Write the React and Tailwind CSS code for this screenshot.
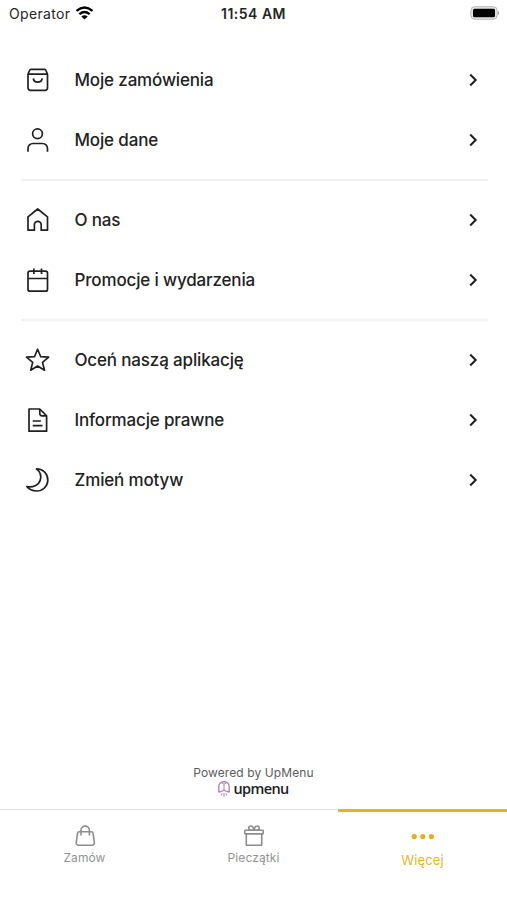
const icons = {
  orders: (
    <>
      <path d="M7 2.300h13.500a1.500 1.500 0 0 1 1.400 1l1.600 4v13.700a2.300 2.300 0 0 1-2.300 2.300H6.300a2.300 2.300 0 0 1-2.300-2.300V7.300l1.600-4a1.500 1.500 0 0 1 1.400-1z" strokeLinejoin="round" />
      <path d="M4 7.200h19.500M9.300 11.300c.6 5 8.300 5 8.900 0" />
    </>
  ),
  user: (
    <>
      <circle cx="13.5" cy="6.7" r="4.9" />
      <path d="M4 24.7v-3.2a5 5 0 0 1 5-5h9.5a5 5 0 0 1 5 5v3.2" />
    </>
  ),
  home: <path d="M4 23.2V9.8l9.7-7.8 9.8 7.8v13.4h-6.3v-5.4a3.4 3.4 0 0 0-6.8 0v5.4z" strokeLinejoin="round" />,
  calendar: (
    <>
      <rect x="4" y="4.2" width="19.5" height="20" rx="2" />
      <path d="M4 11.500h19.500M9.900 1.500v5.400M17.500 1.500v5.400" />
    </>
  ),
  star: <path d="M13.6 2.2l3.1 7.5 8 .5-6.2 5.2 2 7.8-6.9-4.2-6.9 4.2 2-7.8-6.2-5.2 8-.5z" strokeLinejoin="round" />,
  doc: (
    <>
      <path d="M15.8 2H5v22.2h17.6V8.8z" strokeLinejoin="round" />
      <path d="M15.800 2v4.800a2 2 0 0 0 2 2h4.800M8.700 14h8.200M8.700 18.700h9.800" strokeLinejoin="round" />
    </>
  ),
  moon: <path d="M12.400 1.900C20 2 24 7.500 23.800 13.500C23.600 19.500 18.600 24 12.800 24C8.500 24 4.700 22.200 2.800 19.600C9 20.600 14.700 18.400 16.300 13C17.500 8.800 15.800 4.500 12.400 1.900z" strokeLinejoin="round" />,
};

const groups = [
  [
    ["orders", "Moje zamówienia"],
    ["user", "Moje dane"],
  ],
  [
    ["home", "O nas"],
    ["calendar", "Promocje i wydarzenia"],
  ],
  [
    ["star", "Oceń naszą aplikację"],
    ["doc", "Informacje prawne"],
    ["moon", "Zmień motyw"],
  ],
];

function Row({ icon, label }) {
  return (
    <div className="flex h-[60px] items-center pl-6 pr-[26px]">
      <svg className="h-[26px] w-[26px] shrink-0 overflow-visible" viewBox="0 0 26 26" fill="none" stroke="#202020" strokeWidth="1.7">
        {icons[icon]}
      </svg>
      <span className="ml-[24.5px] flex-1 whitespace-nowrap text-[17px] font-medium leading-6 tracking-[-0.16px] text-[#222222]">{label}</span>
      <svg className="h-4 w-4" viewBox="0 0 16 16" fill="none" stroke="#202020" strokeWidth="2">
        <path d="M5.200 2.500l5.500 5.500-5.500 5.500" />
      </svg>
    </div>
  );
}

export default function App() {
  return (
    <div className="flex h-[900px] w-[507px] flex-col overflow-hidden bg-white font-['Inter','Liberation_Sans',sans-serif]">
      <header className="grid h-[27px] grid-cols-3 items-center px-[9px] text-[#252525]">
        <div className="flex items-center gap-[5px]">
          <span className="text-[14px] tracking-[0.35px]">Operator</span>
          <svg className="-mt-[2px] h-[14px] w-[19px]" viewBox="0 0 18 14" fill="none" stroke="#000" strokeWidth="2.400">
            <path d="M1 4.900Q9-1.900 17 4.900M3.900 8.100Q9 3.900 14.100 8.100" />
            <path d="M9 13.600L5.800 10.400Q9 7.900 12.200 10.400z" fill="#000" stroke="none" />
          </svg>
        </div>
        <span className="whitespace-nowrap text-center text-[14px] font-semibold tracking-[0.5px]">11:54 AM</span>
        <svg className="-mt-[2px] h-[14px] w-[30px] justify-self-end overflow-visible" viewBox="0 0 30 14">
          <rect x="2.800" y="0.700" width="26.400" height="12.600" rx="4" fill="#e4e4e4" stroke="#b8b8b8" />
          <rect x="5" y="2.700" width="22" height="8.600" rx="1.500" fill="#000" />
          <path d="M30 5q2.200 2 0 4z" fill="#999" />
        </svg>
      </header>
      <main className="flex flex-1 flex-col pt-[23px]">
        {groups.map((group, i) => (
          <section key={i}>
            {i > 0 && (
              <div className="flex h-5 items-start pl-[21px] pr-[19px]">
                <div className="mt-[9px] h-[2px] w-full bg-[#f1f1f1]" />
              </div>
            )}
            {group.map(([icon, label]) => (
              <Row key={label} icon={icon} label={label} />
            ))}
          </section>
        ))}
        <div className="mt-auto flex h-[43px] flex-col items-center">
          <span className="text-[12px] leading-[14px] tracking-[0.1px] text-[#5b5b5b]">Powered by UpMenu</span>
          <div className="flex h-[18px] items-center gap-[3px]">
            <svg className="h-[16px] w-[12px]" viewBox="0 0 12 16" fill="none" stroke="#b07dbd" strokeWidth="1.300" strokeLinejoin="round">
              <path d="M6 9.300Q4 10.500.8 11V5Q1 2.500 3 1.500 4.500.6 6 .8 7.500.6 9 1.500q2 1 2.200 3.500v6Q8 10.500 6 9.300z" />
              <path d="M3.500 2Q5.500 2 6 3.500 6.500 2 8.500 2M6 3.500v6M3.700 12.500v2M6 12v3.500M8.300 12.500v2" strokeWidth="1" />
            </svg>
            <span className="font-['Open_Sans','Noto_Sans',sans-serif] text-[14.5px] font-semibold leading-[18px] tracking-[-0.6px] text-[#202020]">upmenu</span>
          </div>
        </div>
      </main>
      <nav className="grid h-[91px] grid-cols-3 text-[12px] text-[#929292]">
        <div className="flex flex-col items-center border-t border-[#e4e4e4] pt-[14px]">
          <svg className="h-6 w-6 overflow-visible" viewBox="0 0 24 24" fill="none" stroke="#8d8d8d" strokeWidth="1.600">
            <path d="M6.300 7.800h12a1.800 1.800 0 0 1 1.800 1.500l1.300 9.500a2.200 2.200 0 0 1-2.200 2.400H5.400a2.200 2.200 0 0 1-2.200-2.400l1.300-9.500a1.800 1.800 0 0 1 1.800-1.500z" />
            <path d="M8 11.500V6.300a4.200 4.200 0 0 1 8.400 0v5.200" />
          </svg>
          <span className="mt-px leading-[18px] tracking-[0.1px]">Zamów</span>
        </div>
        <div className="flex flex-col items-center border-t border-[#e4e4e4] pt-[14px]">
          <svg className="h-6 w-6" viewBox="0 0 24 24" fill="none" stroke="#8d8d8d" strokeWidth="1.600">
            <rect x="2.800" y="6.300" width="18.400" height="3.600" rx=".5" />
            <path d="M4.300 9.900v11.300h15.400V9.900" strokeLinejoin="round" />
            <path d="M12 6.300H9C6 6.300 6 2 8.700 2 10.800 2 11.600 4 12 6.300zM12 6.300h3C18 6.300 18 2 15.300 2 13.200 2 12.400 4 12 6.300z" strokeLinejoin="round" />
          </svg>
          <span className="mt-px leading-[18px] tracking-[0.1px]">Pieczątki</span>
        </div>
        <div className="flex flex-col items-center border-t-[3px] border-[#e8b121] pt-[12px] text-[#e4b62f]">
          <svg className="h-6 w-6" viewBox="0 0 24 24" fill="#e6ae1c">
            <circle cx="3.200" cy="12.500" r="2.600" />
            <circle cx="11.800" cy="12.500" r="2.600" />
            <circle cx="20.400" cy="12.500" r="2.600" />
          </svg>
          <span className="mt-[3px] text-[13px] leading-[18px] tracking-[0.1px]">Więcej</span>
        </div>
      </nav>
    </div>
  );
}
